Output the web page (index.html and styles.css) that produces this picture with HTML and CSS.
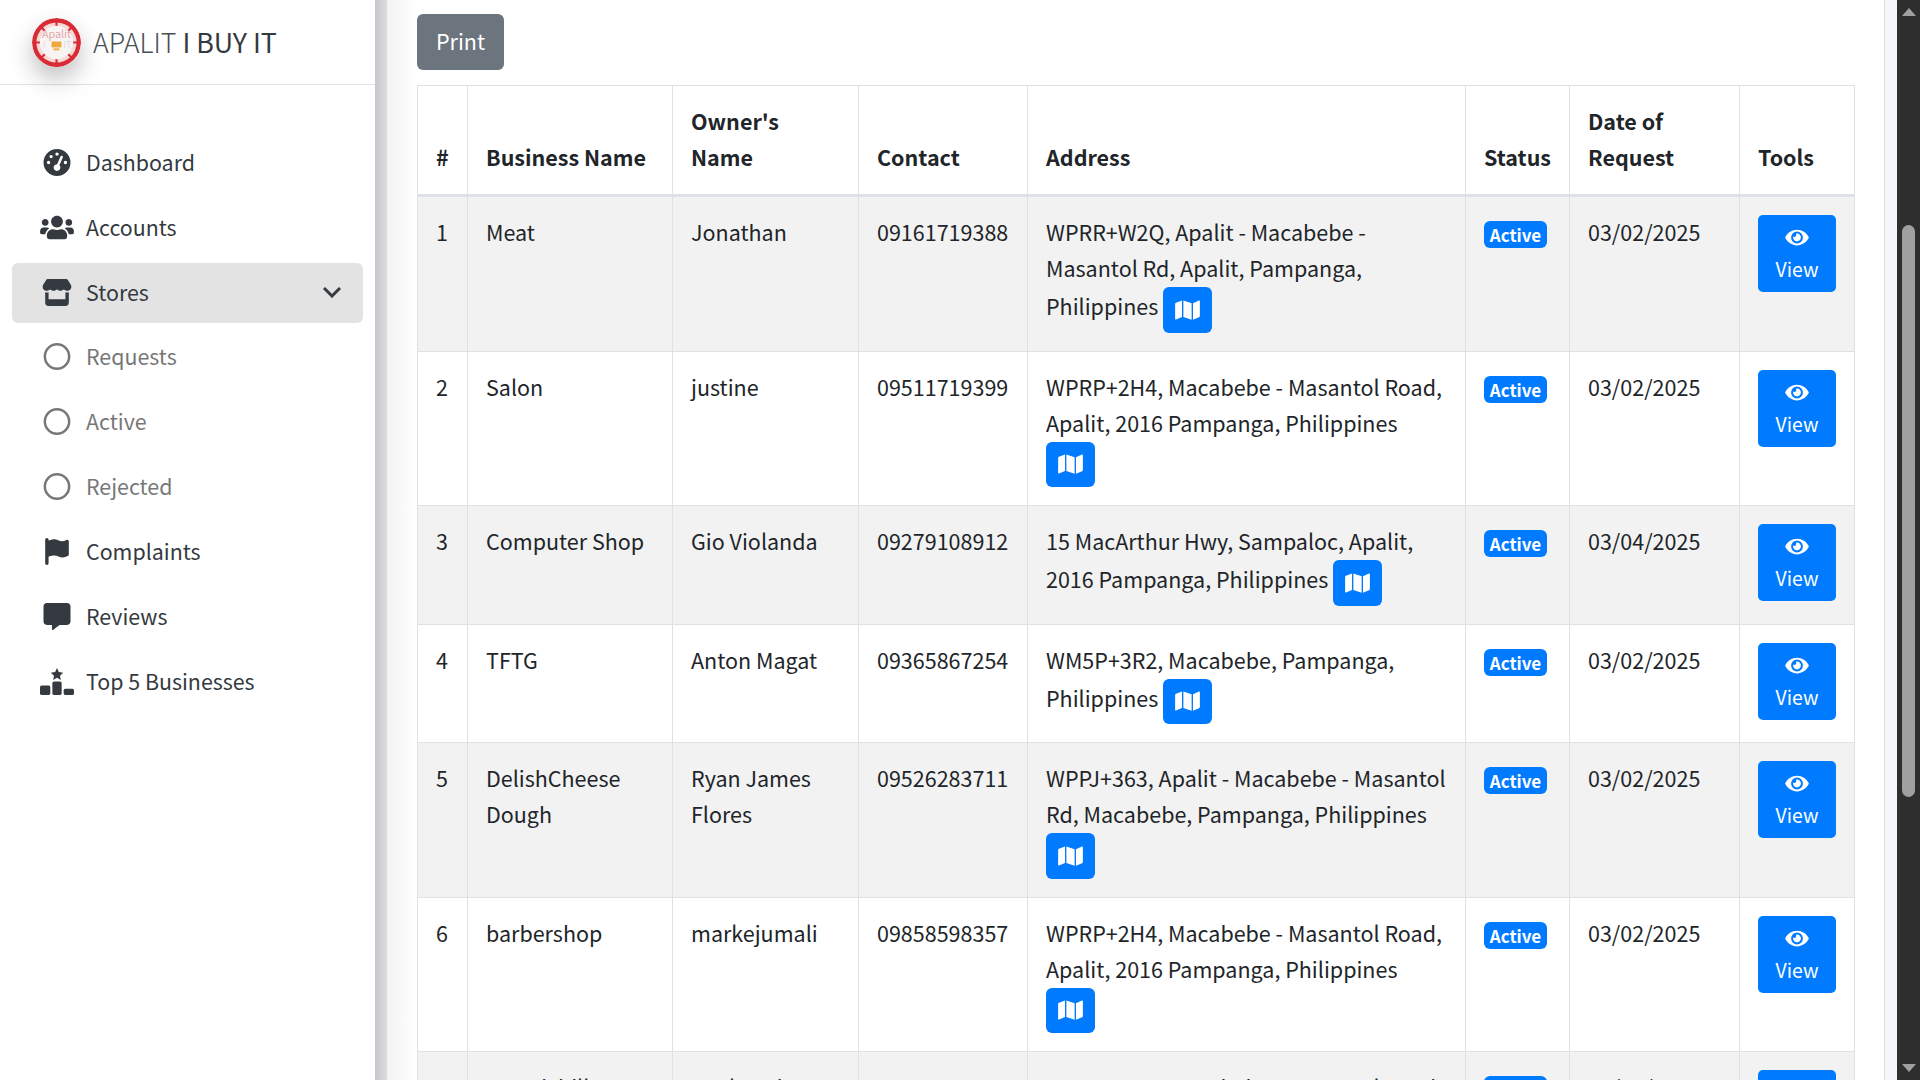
FILE: index.html
```html
<!DOCTYPE html>
<html lang="en">
<head>
    <meta charset="UTF-8">
    <title>Apalit I Buy It</title>
    <link rel="stylesheet" href="styles.css">
</head>
<body>
<div class="wrapper">

    <!-- Sidebar -->
    <aside class="sidebar">
        <div class="brand">
            <svg class="brand-logo" viewBox="0 0 50 50">
                <circle cx="25" cy="25" r="25" fill="#d92b35"/>
                <circle cx="25" cy="25" r="20.5" fill="#f6d9d6"/>
                <g stroke="#d92b35" stroke-width="2.2">
                    <path d="M25 3v6M25 41v6M3 25h6M41 25h6M9.4 9.4l4.4 4.4M36.2 36.2l4.4 4.4M40.6 9.4l-4.4 4.4M13.8 36.2l-4.4 4.4"/>
                </g>
                <circle cx="25" cy="25" r="17" fill="#f7f4f3"/>
                <text x="25" y="20" class="logo-top" text-anchor="middle">Apalit</text>
                <rect x="20" y="24" width="10" height="6" fill="#f0a93c"/>
                <rect x="22" y="31" width="6" height="2" fill="#f0a93c"/>
                <text x="11" y="31" class="logo-bottom">I</text>
                <text x="32" y="31" class="logo-bottom">IT</text>
            </svg>
            <span class="brand-text"><span class="brand-light">APALIT</span> I BUY IT</span>
        </div>
        <nav class="nav">
            <a class="nav-link">
                <svg class="nav-icon" viewBox="0 0 512 512"><path d="M0 256a256 256 0 1 1 512 0A256 256 0 1 1 0 256zM288 96a32 32 0 1 0 -64 0 32 32 0 1 0 64 0zM256 416c35.3 0 64-28.7 64-64c0-17.4-6.9-33.1-18.1-44.6L366 161.7c5.3-12.1-.2-26.3-12.3-31.6s-26.3 .2-31.6 12.3L257.9 288c-.6 0-1.3 0-1.9 0c-35.3 0-64 28.7-64 64s28.7 64 64 64zM176 144a32 32 0 1 0 -64 0 32 32 0 1 0 64 0zM96 288a32 32 0 1 0 0-64 32 32 0 1 0 0 64zm352-32a32 32 0 1 0 -64 0 32 32 0 1 0 64 0z"/></svg>
                Dashboard
            </a>
            <a class="nav-link">
                <svg class="nav-icon" viewBox="0 0 640 512"><path d="M96 224c35.3 0 64-28.7 64-64s-28.7-64-64-64-64 28.7-64 64 28.7 64 64 64zm448 0c35.3 0 64-28.7 64-64s-28.7-64-64-64-64 28.7-64 64 28.7 64 64 64zm32 32h-64c-17.6 0-33.5 7.1-45.1 18.6 40.3 22.1 68.9 62 75.1 109.4h66c17.7 0 32-14.3 32-32v-32c0-35.3-28.7-64-64-64zm-256 0c61.9 0 112-50.1 112-112S381.9 32 320 32 208 82.1 208 144s50.1 112 112 112zm76.8 32h-8.3c-20.8 10-43.9 16-68.5 16s-47.6-6-68.5-16h-8.3C179.6 288 128 339.6 128 403.2V432c0 26.5 21.5 48 48 48h288c26.5 0 48-21.5 48-48v-28.8c0-63.6-51.6-115.2-115.2-115.2zm-223.7-13.4C161.5 263.1 145.6 256 128 256H64c-35.3 0-64 28.7-64 64v32c0 17.7 14.3 32 32 32h65.9c6.3-47.4 34.9-87.3 75.2-109.4z"/></svg>
                Accounts
            </a>
            <a class="nav-link active">
                <svg class="nav-icon" viewBox="0 0 576 512"><path d="M547.6 103.8L490.3 13.1C485.2 5 476.1 0 466.4 0H109.6C99.9 0 90.8 5 85.7 13.1L28.3 103.8c-29.6 46.8-3.4 111.9 51.9 119.4c4 .5 8.1 .8 12.1 .8c26.1 0 49.3-11.4 65.2-29c15.9 17.6 39.1 29 65.2 29c26.1 0 49.3-11.4 65.2-29c15.9 17.6 39.1 29 65.2 29c26.2 0 49.3-11.4 65.2-29c16 17.6 39.1 29 65.2 29c4.1 0 8.1-.3 12.1-.8c55.5-7.4 81.8-72.5 52.1-119.4zM499.7 254.9l-.1 0c-5.3 .7-10.7 1.1-16.2 1.1c-12.4 0-24.3-1.9-35.4-5.3V384H128V250.6c-11.2 3.5-23.2 5.4-35.6 5.4c-5.5 0-11-.4-16.3-1.1l-.1 0c-4.1-.6-8.1-1.3-12-2.3V384v64c0 35.3 28.7 64 64 64H448c35.3 0 64-28.7 64-64V384 252.6c-4 1-8 1.8-12.3 2.3z"/></svg>
                Stores
                <svg class="nav-arrow" viewBox="0 0 18 12"><path d="M1 2l8 8 8-8" fill="none" stroke="#343a40" stroke-width="3"/></svg>
            </a>
            <a class="nav-link sub">
                <svg class="nav-icon" viewBox="0 0 26 26"><circle cx="13" cy="13" r="11.7" fill="none" stroke="#777" stroke-width="2.4"/></svg>
                Requests
            </a>
            <a class="nav-link sub">
                <svg class="nav-icon" viewBox="0 0 26 26"><circle cx="13" cy="13" r="11.7" fill="none" stroke="#777" stroke-width="2.4"/></svg>
                Active
            </a>
            <a class="nav-link sub">
                <svg class="nav-icon" viewBox="0 0 26 26"><circle cx="13" cy="13" r="11.7" fill="none" stroke="#777" stroke-width="2.4"/></svg>
                Rejected
            </a>
            <a class="nav-link">
                <svg class="nav-icon" viewBox="0 0 448 512"><path d="M64 32C64 14.3 49.7 0 32 0S0 14.3 0 32V64 368 480c0 17.7 14.3 32 32 32s32-14.3 32-32V352l64.3-16.1c41.1-10.3 84.6-5.5 122.5 13.4c44.2 22.1 95.5 24.8 141.7 7.4l34.7-13c12.5-4.7 20.8-16.6 20.8-30V66.1c0-23-24.2-38-44.8-27.7l-9.6 4.8c-46.3 23.2-100.8 23.2-147.1 0c-35.1-17.6-75.4-22-113.5-12.5L64 48V32z"/></svg>
                Complaints
            </a>
            <a class="nav-link">
                <svg class="nav-icon" viewBox="0 0 512 512"><path d="M448 0H64C28.7 0 0 28.7 0 64v288c0 35.3 28.7 64 64 64h96v84c0 9.8 11.2 15.5 19.1 9.7L304 416h144c35.3 0 64-28.7 64-64V64c0-35.3-28.7-64-64-64z"/></svg>
                Reviews
            </a>
            <a class="nav-link">
                <svg class="nav-icon" viewBox="0 0 33 26"><polygon points="16.5,0 18.3,3.9 22.5,4.4 19.4,7.3 20.2,11.5 16.5,9.4 12.8,11.5 13.6,7.3 10.5,4.4 14.7,3.9"/><rect x="12" y="13" width="9" height="13" rx="1.5"/><rect x="0" y="17" width="10" height="9" rx="1.5"/><rect x="23" y="20" width="10" height="6" rx="1.5"/></svg>
                Top 5 Businesses
            </a>
        </nav>
    </aside>
    <div class="sidebar-shade"></div>

    <!-- Main content -->
    <main class="content">
        <button class="btn-print">Print</button>
        <table class="table">
            <colgroup>
                <col class="col-num"><col class="col-name"><col class="col-owner"><col class="col-contact">
                <col class="col-address"><col class="col-status"><col class="col-date"><col class="col-tools">
            </colgroup>
            <thead>
                <tr>
                    <th>#</th><th>Business Name</th><th>Owner's Name</th><th>Contact</th>
                    <th>Address</th><th>Status</th><th>Date of Request</th><th>Tools</th>
                </tr>
            </thead>
            <tbody>
                <tr>
                    <td>1</td><td>Meat</td><td>Jonathan</td><td>09161719388</td>
                    <td>WPRR+W2Q, Apalit - Macabebe - Masantol Rd, Apalit, Pampanga, Philippines
                        <a class="btn-map"><svg viewBox="0 0 576 512"><path d="M0 117.66v346.32c0 11.32 11.43 19.06 21.94 14.86L160 416V32L20.12 87.95A32.006 32.006 0 0 0 0 117.66zM192 416l192 64V96L192 32v384zM554.06 33.16L416 96v384l139.88-55.95A31.996 31.996 0 0 0 576 394.34V48.02c0-11.32-11.43-19.06-21.94-14.86z"/></svg></a></td>
                    <td><span class="badge">Active</span></td><td>03/02/2025</td>
                    <td><a class="btn-view"><svg viewBox="0 0 576 512"><path d="M572.52 241.4C518.29 135.59 410.93 64 288 64S57.68 135.64 3.48 241.41a32.35 32.35 0 0 0 0 29.19C57.71 376.41 165.07 448 288 448s230.32-71.64 284.52-177.41a32.35 32.35 0 0 0 0-29.19zM288 400a144 144 0 1 1 144-144 143.93 143.93 0 0 1-144 144zm0-240a95.31 95.31 0 0 0-25.31 3.79 47.85 47.85 0 0 1-66.9 66.9A95.78 95.78 0 1 0 288 160z"/></svg>View</a></td>
                </tr>
                <tr>
                    <td>2</td><td>Salon</td><td>justine</td><td>09511719399</td>
                    <td>WPRP+2H4, Macabebe - Masantol Road, Apalit, 2016 Pampanga, Philippines
                        <a class="btn-map"><svg viewBox="0 0 576 512"><path d="M0 117.66v346.32c0 11.32 11.43 19.06 21.94 14.86L160 416V32L20.12 87.95A32.006 32.006 0 0 0 0 117.66zM192 416l192 64V96L192 32v384zM554.06 33.16L416 96v384l139.88-55.95A31.996 31.996 0 0 0 576 394.34V48.02c0-11.32-11.43-19.06-21.94-14.86z"/></svg></a></td>
                    <td><span class="badge">Active</span></td><td>03/02/2025</td>
                    <td><a class="btn-view"><svg viewBox="0 0 576 512"><path d="M572.52 241.4C518.29 135.59 410.93 64 288 64S57.68 135.64 3.48 241.41a32.35 32.35 0 0 0 0 29.19C57.71 376.41 165.07 448 288 448s230.32-71.64 284.52-177.41a32.35 32.35 0 0 0 0-29.19zM288 400a144 144 0 1 1 144-144 143.93 143.93 0 0 1-144 144zm0-240a95.31 95.31 0 0 0-25.31 3.79 47.85 47.85 0 0 1-66.9 66.9A95.78 95.78 0 1 0 288 160z"/></svg>View</a></td>
                </tr>
                <tr>
                    <td>3</td><td>Computer Shop</td><td>Gio Violanda</td><td>09279108912</td>
                    <td>15 MacArthur Hwy, Sampaloc, Apalit, 2016 Pampanga, Philippines
                        <a class="btn-map"><svg viewBox="0 0 576 512"><path d="M0 117.66v346.32c0 11.32 11.43 19.06 21.94 14.86L160 416V32L20.12 87.95A32.006 32.006 0 0 0 0 117.66zM192 416l192 64V96L192 32v384zM554.06 33.16L416 96v384l139.88-55.95A31.996 31.996 0 0 0 576 394.34V48.02c0-11.32-11.43-19.06-21.94-14.86z"/></svg></a></td>
                    <td><span class="badge">Active</span></td><td>03/04/2025</td>
                    <td><a class="btn-view"><svg viewBox="0 0 576 512"><path d="M572.52 241.4C518.29 135.59 410.93 64 288 64S57.68 135.64 3.48 241.41a32.35 32.35 0 0 0 0 29.19C57.71 376.41 165.07 448 288 448s230.32-71.64 284.52-177.41a32.35 32.35 0 0 0 0-29.19zM288 400a144 144 0 1 1 144-144 143.93 143.93 0 0 1-144 144zm0-240a95.31 95.31 0 0 0-25.31 3.79 47.85 47.85 0 0 1-66.9 66.9A95.78 95.78 0 1 0 288 160z"/></svg>View</a></td>
                </tr>
                <tr>
                    <td>4</td><td>TFTG</td><td>Anton Magat</td><td>09365867254</td>
                    <td>WM5P+3R2, Macabebe, Pampanga, Philippines
                        <a class="btn-map"><svg viewBox="0 0 576 512"><path d="M0 117.66v346.32c0 11.32 11.43 19.06 21.94 14.86L160 416V32L20.12 87.95A32.006 32.006 0 0 0 0 117.66zM192 416l192 64V96L192 32v384zM554.06 33.16L416 96v384l139.88-55.95A31.996 31.996 0 0 0 576 394.34V48.02c0-11.32-11.43-19.06-21.94-14.86z"/></svg></a></td>
                    <td><span class="badge">Active</span></td><td>03/02/2025</td>
                    <td><a class="btn-view"><svg viewBox="0 0 576 512"><path d="M572.52 241.4C518.29 135.59 410.93 64 288 64S57.68 135.64 3.48 241.41a32.35 32.35 0 0 0 0 29.19C57.71 376.41 165.07 448 288 448s230.32-71.64 284.52-177.41a32.35 32.35 0 0 0 0-29.19zM288 400a144 144 0 1 1 144-144 143.93 143.93 0 0 1-144 144zm0-240a95.31 95.31 0 0 0-25.31 3.79 47.85 47.85 0 0 1-66.9 66.9A95.78 95.78 0 1 0 288 160z"/></svg>View</a></td>
                </tr>
                <tr>
                    <td>5</td><td>DelishCheese Dough</td><td>Ryan James Flores</td><td>09526283711</td>
                    <td>WPPJ+363, Apalit - Macabebe - Masantol Rd, Macabebe, Pampanga, Philippines
                        <a class="btn-map"><svg viewBox="0 0 576 512"><path d="M0 117.66v346.32c0 11.32 11.43 19.06 21.94 14.86L160 416V32L20.12 87.95A32.006 32.006 0 0 0 0 117.66zM192 416l192 64V96L192 32v384zM554.06 33.16L416 96v384l139.88-55.95A31.996 31.996 0 0 0 576 394.34V48.02c0-11.32-11.43-19.06-21.94-14.86z"/></svg></a></td>
                    <td><span class="badge">Active</span></td><td>03/02/2025</td>
                    <td><a class="btn-view"><svg viewBox="0 0 576 512"><path d="M572.52 241.4C518.29 135.59 410.93 64 288 64S57.68 135.64 3.48 241.41a32.35 32.35 0 0 0 0 29.19C57.71 376.41 165.07 448 288 448s230.32-71.64 284.52-177.41a32.35 32.35 0 0 0 0-29.19zM288 400a144 144 0 1 1 144-144 143.93 143.93 0 0 1-144 144zm0-240a95.31 95.31 0 0 0-25.31 3.79 47.85 47.85 0 0 1-66.9 66.9A95.78 95.78 0 1 0 288 160z"/></svg>View</a></td>
                </tr>
                <tr>
                    <td>6</td><td>barbershop</td><td>markejumali</td><td>09858598357</td>
                    <td>WPRP+2H4, Macabebe - Masantol Road, Apalit, 2016 Pampanga, Philippines
                        <a class="btn-map"><svg viewBox="0 0 576 512"><path d="M0 117.66v346.32c0 11.32 11.43 19.06 21.94 14.86L160 416V32L20.12 87.95A32.006 32.006 0 0 0 0 117.66zM192 416l192 64V96L192 32v384zM554.06 33.16L416 96v384l139.88-55.95A31.996 31.996 0 0 0 576 394.34V48.02c0-11.32-11.43-19.06-21.94-14.86z"/></svg></a></td>
                    <td><span class="badge">Active</span></td><td>03/02/2025</td>
                    <td><a class="btn-view"><svg viewBox="0 0 576 512"><path d="M572.52 241.4C518.29 135.59 410.93 64 288 64S57.68 135.64 3.48 241.41a32.35 32.35 0 0 0 0 29.19C57.71 376.41 165.07 448 288 448s230.32-71.64 284.52-177.41a32.35 32.35 0 0 0 0-29.19zM288 400a144 144 0 1 1 144-144 143.93 143.93 0 0 1-144 144zm0-240a95.31 95.31 0 0 0-25.31 3.79 47.85 47.85 0 0 1-66.9 66.9A95.78 95.78 0 1 0 288 160z"/></svg>View</a></td>
                </tr>
                <tr>
                    <td>7</td><td>Grandchillers</td><td>Mark Jade</td><td>09123456789</td>
                    <td>WPRP+2H4, Macabebe - Masantol Road, Apalit, 2016 Pampanga, Philippines</td>
                    <td><span class="badge">Active</span></td><td>03/02/2025</td>
                    <td><a class="btn-view"><svg viewBox="0 0 576 512"><path d="M572.52 241.4C518.29 135.59 410.93 64 288 64S57.68 135.64 3.48 241.41a32.35 32.35 0 0 0 0 29.19C57.71 376.41 165.07 448 288 448s230.32-71.64 284.52-177.41a32.35 32.35 0 0 0 0-29.19zM288 400a144 144 0 1 1 144-144 143.93 143.93 0 0 1-144 144zm0-240a95.31 95.31 0 0 0-25.31 3.79 47.85 47.85 0 0 1-66.9 66.9A95.78 95.78 0 1 0 288 160z"/></svg>View</a></td>
                </tr>
            </tbody>
        </table>
    </main>

    <!-- Browser scrollbar -->
    <div class="scrollbar">
        <span class="arrow-up"></span>
        <span class="thumb"></span>
        <span class="arrow-down"></span>
    </div>
</div>
</body>
</html>
```

FILE: styles.css
```css
html, body {
    margin: 0;
    height: 100%;
    overflow: hidden;
}
body {
    font-family: "Noto Sans CJK SC", "Noto Sans", sans-serif;
    font-size: 21.5px;
    line-height: 36px;
    color: #212529;
    background-color: #f4f6f9;
}
.wrapper {
    display: flex;
    height: 1080px;
}

/* sidebar */
.sidebar {
    width: 375px;
    flex-shrink: 0;
    background-color: #fff;
}
.sidebar-shade {
    width: 12px;
    flex-shrink: 0;
    background: linear-gradient(to right, #c6c7ca, #dcdcde);
}
.brand {
    display: flex;
    align-items: center;
    height: 84px;
    padding-left: 32px;
    border-bottom: 1px solid #dee2e6;
}
.brand-logo {
    width: 49px;
    height: 49px;
    margin-right: 12px;
    border-radius: 50%;
    box-shadow: 0 12px 24px rgba(0, 0, 0, .25);
}
.logo-top {
    font-size: 11px;
    fill: #e3a8a8;
}
.logo-bottom {
    font-size: 9px;
    fill: #dcdcdc;
}
.brand-text {
    margin-bottom: 2px;
    font-size: 26.8px;
    line-height: 45px;
    color: #343a40;
}
.brand-light {
    font-weight: 300;
    color: #4a4f54;
}
.nav {
    display: flex;
    flex-direction: column;
    padding: 48px 12px 0;
}
.nav-link {
    display: flex;
    align-items: center;
    box-sizing: border-box;
    height: 60px;
    margin-bottom: 5px;
    padding: 0 0 2px 28px;
    border-radius: 6px;
    font-size: 21.4px;
    color: #343a40;
}
.nav-link.active {
    margin-bottom: 4px;
    background-color: #e3e3e3;
}
.nav-link.sub {
    color: #777;
}
.nav-icon {
    width: 34px;
    height: 27px;
    margin-right: 12px;
    flex-shrink: 0;
    fill: #343a40;
}
.nav-arrow {
    width: 18px;
    height: 12px;
    margin-left: auto;
    margin-right: 22px;
}

/* content */
.content {
    flex: 1;
    padding: 14px 0 0 30px;
    border-right: 1px solid #dcdcde;
    background: linear-gradient(to right, #f3f3f3, #fff 30px);
    overflow: hidden;
}
.btn-print {
    display: block;
    width: 87px;
    height: 56px;
    margin-bottom: 15px;
    padding: 0 0 2px;
    border: none;
    border-radius: 6px;
    font: inherit;
    color: #fff;
    background-color: #6c757d;
}
.table {
    width: 1437px;
    border-collapse: collapse;
    table-layout: fixed;
    background-color: #fff;
}
.table th, .table td {
    padding: 17px 18px 19px;
    border: 1.5px solid #dee2e6;
    vertical-align: top;
    text-align: left;
}
.table th {
    vertical-align: bottom;
    border-bottom-width: 3px;
    font-weight: 700;
}
.table tbody tr:nth-child(odd) {
    background-color: #f2f2f2;
}
.col-num { width: 50px; }
.col-name { width: 205px; }
.col-owner { width: 186px; }
.col-contact { width: 169px; }
.col-address { width: 438px; }
.col-status { width: 104px; }
.col-date { width: 170px; }
.col-tools { width: 115px; }

.badge {
    display: inline-block;
    width: 63px;
    height: 27px;
    margin-top: 7px;
    border-radius: 6px;
    font-size: 17px;
    line-height: 27px;
    font-weight: 700;
    text-align: center;
    vertical-align: top;
    color: #fff;
    background-color: #007bff;
}
.btn-map {
    display: inline-flex;
    align-items: center;
    justify-content: center;
    width: 49px;
    height: 45.5px;
    margin: 1px 0 -1px;
    border-radius: 6px;
    vertical-align: middle;
    background-color: #007bff;
}
.btn-map svg {
    width: 25px;
    height: 22px;
    fill: #fff;
}
.btn-view {
    display: flex;
    flex-direction: column;
    align-items: center;
    height: 77px;
    margin-top: 1px;
    padding-top: 12px;
    box-sizing: border-box;
    border-radius: 5px;
    font-size: 19.4px;
    line-height: 31px;
    color: #fff;
    background-color: #007bff;
}
.btn-view svg {
    width: 24px;
    height: 21px;
    margin-bottom: 5px;
    fill: #fff;
}

/* scrollbar */
.scrollbar {
    width: 23px;
    margin-left: 12px;
    flex-shrink: 0;
    display: flex;
    flex-direction: column;
    align-items: center;
    background-color: #2e2e2e;
}
.arrow-up {
    margin-top: 8px;
    border: 7.5px solid transparent;
    border-top: none;
    border-bottom: 8px solid #a0a0a0;
}
.thumb {
    width: 13px;
    height: 572px;
    margin-top: 209px;
    border-radius: 7px;
    background-color: #a0a0a0;
}
.arrow-down {
    margin-top: auto;
    margin-bottom: 8px;
    border: 7.5px solid transparent;
    border-bottom: none;
    border-top: 8px solid #a0a0a0;
}
```
